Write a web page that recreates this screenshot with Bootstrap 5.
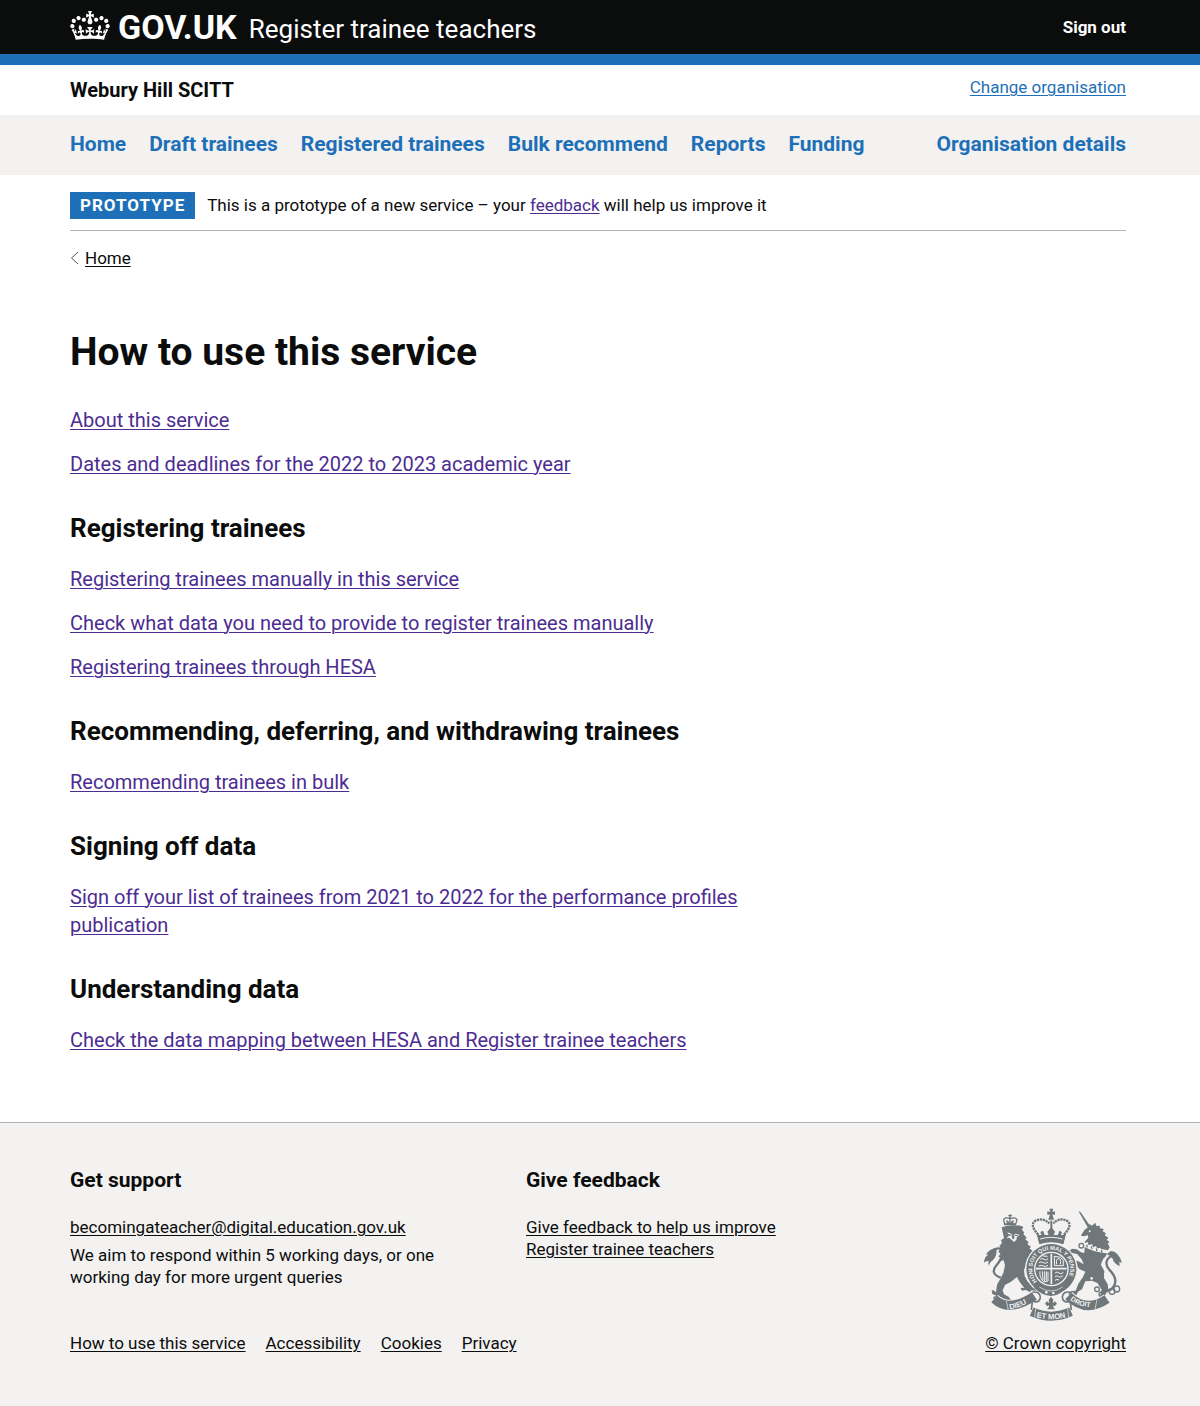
<!DOCTYPE html>
<html lang="en">
<head>
<meta charset="utf-8">
<meta name="viewport" content="width=device-width, initial-scale=1">
<title>How to use this service - Register trainee teachers</title>
<link href="https://cdn.jsdelivr.net/npm/bootstrap@5.3.0/dist/css/bootstrap.min.css" rel="stylesheet">
<style>
  body { font-family: Roboto, "Liberation Sans", sans-serif; font-size: 17px; line-height: 22px; color: #0b0c0c; background: #f3f2f1; }
  .page-width { max-width: 1060px; margin: 0 auto; padding-right: 4px; }
  a { color: inherit; text-decoration-thickness: 1px; text-underline-offset: 2px; }
  a:hover { color: #003078; }
  .site-header { background: #0b0c0c; border-bottom: 11px solid #1d70b8; color: #fff; }
  .site-header .page-width { height: 54px; }
  .logo-text { font-size: 34px; line-height: 40px; font-weight: 700; }
  .service-name { font-size: 26px; line-height: 40px; padding-top: 4px; }
  .org-bar { background: #fff; padding: 11px 0; }
  .org-name { font-size: 20px; line-height: 28px; }
  .blue-link { color: #1d70b8; }
  .main-nav { background: #f3f2f1; font-size: 21px; line-height: 28px; font-weight: 700; padding: 15px 0 17px; }
  .main-nav ul { column-gap: 23px; }
  .phase-banner { border-bottom: 1px solid #b1b4b6; padding: 17px 0 11px; }
  .phase-banner span { padding-bottom: 2px; }
  .phase-tag { background: #1d70b8; color: #fff; font-weight: 700; letter-spacing: 1px; line-height: 27px; padding: 0 10px; margin-right: 12px; }
  .visited { color: #4c2c92; }
  .crumb { padding-top: 16px; column-gap: 6px; }
  .content { font-size: 20px; line-height: 28px; padding: 61px 0 67px; }
  .content h1 { font-size: 39px; line-height: 44px; font-weight: 700; margin: 0 0 32px; }
  .content h2 { font-size: 26px; line-height: 32px; font-weight: 700; margin: 34px 0 21px; }
  .content p { margin: 0 0 16px; }
  .content p:last-child { margin: 0 0 1px; }
  .two-thirds { max-width: 690px; }
  .site-footer { border-top: 1px solid #b1b4b6; padding: 43px 0 52px; }
  .site-footer h2 { font-size: 21px; line-height: 28px; font-weight: 700; margin: 0 0 22px; }
  .site-footer p { margin: 6px 0 44px; max-width: 390px; }
  .foot-links { column-gap: 20px; }
  .crest-block { min-width: 144px; row-gap: 10px; }
</style>
<script src="https://cdn.jsdelivr.net/npm/bootstrap@5.3.0/dist/js/bootstrap.bundle.min.js"></script>
</head>
<body>
<header>
  <div class="site-header">
    <div class="page-width d-flex align-items-center justify-content-between">
      <div class="d-flex align-items-center">
        <a href="#" class="d-flex align-items-center text-decoration-none text-white">
          <svg class="mb-1" width="40" height="29" viewBox="0 0 132 97" fill="#fff" aria-hidden="true"><path fill-rule="evenodd" d="M25 30.2c3.5 1.5 7.7-.2 9.1-3.7 1.5-3.6-.2-7.8-3.9-9.2-3.6-1.4-7.6.3-9.1 3.9-1.4 3.5.3 7.5 3.9 9zM9 39.5c3.6 1.5 7.8-.2 9.2-3.7 1.5-3.6-.2-7.8-3.9-9.1-3.6-1.5-7.6.2-9.1 3.8-1.4 3.5.3 7.5 3.8 9zM4.4 57.2c3.5 1.5 7.7-.2 9.1-3.8 1.5-3.6-.2-7.7-3.9-9.1-3.5-1.5-7.6.3-9.1 3.8-1.4 3.5.3 7.6 3.9 9.1zm38.3-21.4c3.5 1.5 7.7-.2 9.1-3.8 1.5-3.6-.2-7.7-3.9-9.1-3.6-1.5-7.6.3-9.1 3.8-1.3 3.6.4 7.7 3.9 9.1zm64.4-5.6c-3.6 1.5-7.8-.2-9.1-3.7-1.5-3.6.2-7.8 3.8-9.2 3.6-1.4 7.7.3 9.2 3.9 1.3 3.5-.4 7.5-3.9 9zm15.9 9.3c-3.6 1.5-7.7-.2-9.1-3.7-1.5-3.6.2-7.8 3.7-9.1 3.6-1.5 7.7.2 9.2 3.8 1.5 3.5-.3 7.5-3.8 9zm4.7 17.7c-3.6 1.5-7.8-.2-9.2-3.8-1.5-3.6.2-7.7 3.9-9.1 3.6-1.5 7.7.3 9.2 3.8 1.3 3.5-.4 7.6-3.9 9.1zM89.3 35.8c-3.6 1.5-7.8-.2-9.2-3.8-1.4-3.6.2-7.7 3.9-9.1 3.6-1.5 7.7.3 9.2 3.8 1.4 3.6-.3 7.7-3.9 9.1zM69.7 17.7l8.9 4.7V9.3l-8.9 2.8c-.2-.3-.5-.6-.9-.9L72.4 0H59.6l3.5 11.2c-.3.3-.6.5-.9.9l-8.8-2.8v13.1l8.8-4.7c.3.3.6.7.9.9l-5 15.4v.1c-.2.8-.4 1.6-.4 2.4 0 4.1 3.1 7.5 7 8.1h.2c.3 0 .7.1 1 .1.4 0 .7 0 1-.1h.2c4-.6 7.1-4.1 7.1-8.1 0-.8-.1-1.7-.4-2.4V34l-5.1-15.4c.4-.2.7-.6 1-.9zM66 92.8c16.9 0 32.8 1.1 47.1 3.2 4-16.9 8.9-26.7 14-33.5l-9.6-3.4c1 4.9 1.1 7.2 0 10.2-1.5-1.4-3-4.3-4.2-8.7L108.6 76c2.8-2 5-3.2 7.5-3.3-4.4 9.4-10 11.9-13.6 11.2-4.3-.8-6.3-4.6-5.6-7.9 1-4.7 5.7-5.9 8-.5 4.3-8.7-3-11.4-7.6-8.8 7.1-7.2 7.9-13.5 2.1-21.1-8 6.1-8.1 12.3-4.5 20.8-4.7-5.4-12.1-2.5-9.5 6.2 3.4-5.2 7.9-2 7.2 3.1-.6 4.3-6.4 7.8-13.5 7.2-10.3-.9-10.9-8-11.2-13.8 2.5-.5 7.1 1.8 11 7.3L80.2 60c-4.1 4.4-8 5.3-12.3 5.4 1.4-4.4 8-11.6 8-11.6H55.5s6.4 7.2 7.9 11.6c-4.2-.1-8-1-12.3-5.4l1.4 16.4c3.9-5.5 8.5-7.7 10.9-7.3-.3 5.8-.9 12.8-11.1 13.8-7.2.6-12.9-2.9-13.5-7.2-.7-5 3.8-8.3 7.1-3.1 2.7-8.7-4.6-11.6-9.4-6.2 3.7-8.5 3.6-14.7-4.6-20.8-5.8 7.6-5 13.9 2.2 21.1-4.7-2.6-11.9.1-7.7 8.8 2.3-5.5 7.1-4.2 8.1.5.7 3.3-1.3 7.1-5.7 7.9-3.5.7-9-1.8-13.5-11.2 2.5.1 4.7 1.3 7.5 3.3l-4.7-15.4c-1.2 4.4-2.7 7.2-4.3 8.7-1.1-3-.9-5.3 0-10.2l-9.5 3.4c5 6.9 9.9 16.7 14 33.5 14.8-2.1 30.8-3.2 47.7-3.2z"/></svg>
          <span class="logo-text ms-2">GOV.UK</span>
        </a>
        <a href="#" class="service-name text-decoration-none text-white ms-2 ps-1">Register trainee teachers</a>
      </div>
      <a href="#" class="fw-bold text-decoration-none text-white">Sign out</a>
    </div>
  </div>
  <div class="org-bar">
    <div class="page-width d-flex justify-content-between align-items-start">
      <strong class="org-name">Webury Hill SCITT</strong>
      <a href="#" class="blue-link">Change organisation</a>
    </div>
  </div>
  <nav class="main-nav" aria-label="Primary">
    <ul class="page-width list-unstyled d-flex flex-wrap">
      <li><a href="#" class="blue-link text-decoration-none">Home</a></li>
      <li><a href="#" class="blue-link text-decoration-none">Draft trainees</a></li>
      <li><a href="#" class="blue-link text-decoration-none">Registered trainees</a></li>
      <li><a href="#" class="blue-link text-decoration-none">Bulk recommend</a></li>
      <li><a href="#" class="blue-link text-decoration-none">Reports</a></li>
      <li><a href="#" class="blue-link text-decoration-none">Funding</a></li>
      <li class="ms-auto"><a href="#" class="blue-link text-decoration-none">Organisation details</a></li>
    </ul>
  </nav>
</header>
<div class="bg-white">
  <div class="page-width">
    <div class="phase-banner d-flex align-items-center">
      <strong class="phase-tag">PROTOTYPE</strong>
      <span>This is a prototype of a new service – your <a href="#" class="visited">feedback</a> will help us improve it</span>
    </div>
    <nav class="crumb d-flex align-items-center" aria-label="Breadcrumb">
      <svg width="9" height="14" viewBox="0 0 9 14" fill="none" stroke="#505a5f" aria-hidden="true"><path d="M8 1 1.500 7 8 13"/></svg>
      <a href="#">Home</a>
    </nav>
    <main class="content">
      <div class="two-thirds">
        <h1>How to use this service</h1>
        <p><a href="#" class="visited">About this service</a></p>
        <p><a href="#" class="visited">Dates and deadlines for the 2022 to 2023 academic year</a></p>
        <h2>Registering trainees</h2>
        <p><a href="#" class="visited">Registering trainees manually in this service</a></p>
        <p><a href="#" class="visited">Check what data you need to provide to register trainees manually</a></p>
        <p><a href="#" class="visited">Registering trainees through HESA</a></p>
        <h2>Recommending, deferring, and withdrawing trainees</h2>
        <p><a href="#" class="visited">Recommending trainees in bulk</a></p>
        <h2>Signing off data</h2>
        <p><a href="#" class="visited">Sign off your list of trainees from 2021 to 2022 for the performance profiles publication</a></p>
        <h2>Understanding data</h2>
        <p><a href="#" class="visited">Check the data mapping between HESA and Register trainee teachers</a></p>
      </div>
    </main>
  </div>
</div>
<footer class="site-footer">
  <div class="page-width d-flex align-items-end">
    <div class="flex-grow-1">
      <div class="row g-0">
        <div class="col-6">
          <h2>Get support</h2>
          <a href="#">becomingateacher@digital.education.gov.uk</a>
          <p>We aim to respond within 5 working days, or one working day for more urgent queries</p>
        </div>
        <div class="col-6">
          <h2>Give feedback</h2>
          <a href="#">Give feedback to help us improve<br>Register trainee teachers</a>
        </div>
      </div>
      <ul class="foot-links list-unstyled d-flex flex-wrap mb-0">
        <li><a href="#">How to use this service</a></li>
        <li><a href="#">Accessibility</a></li>
        <li><a href="#">Cookies</a></li>
        <li><a href="#">Privacy</a></li>
      </ul>
    </div>
    <div class="crest-block d-flex flex-column align-items-end">
      <svg class="me-1" width="139" height="114" viewBox="42 39 417 342" fill="#6f777b" aria-hidden="true">
        <!-- lion: tail, small crown, maned head, body and legs -->
        <path d="M72 166q26-16 27 10-1 18-16 34-22 26 12 38" fill="none" stroke="#6f777b" stroke-width="7"/>
        <path d="M82 158q4 26-12 39-9 5-10 17-4-10-1-17-10 1-14 6 1-19 13-24l-7-1q10-16 31-20z"/>
        <g fill="none" stroke="#6f777b" stroke-width="4"><path d="M107 88l-3-14q3-9 19-3 17-6 21 3l-4 14M123 58v26M118 62h11M113 76l3 8M133 76l-3 8"/></g>
        <path d="M105 85h36v6h-36zM113 85l5-7 5 7 5-7 6 7z"/>
        <path d="M98 97q28-11 62-3l3 4-5 5 8 10-3 4 10 11-4 5 10 9-4 5 11 9-5 4 10 8-5 6 13 9-3 6-13-4 26 19-6 13-20-12-11 2-7 18 2 18 9 17 20 15 6 12-15-1-4 6-12-7-12 2-5-9 12 1-14-18-8-15-18 14-18 10-7 16 4 12 14 7 8 11-9-1-5 8-13-7-11 7-6-9-9 3-1-11 9-4-12-5-2-12 8 2 5 5 3-23 10-18 9-17 5-23-4-15-10 2 2-7-8-7 7-7-7-7 7-10-4-7 8-9-3-8 9-7z"/>
        <path d="M115 112l12 4 5 9 7-9 13 4-8 5-2 9-6 7-7-5-8-8-9 2 8-8z" fill="#f3f2f1"/>
        <path d="M117 118h8v4h-8zM138 120h8v3h-8zM127 120l10 4-2 9-5-2z"/>
        <!-- unicorn: horn, head and mane, collar, body, hoofs and tail -->
        <path d="M328 48l7 4 29 42-7 4z"/>
        <path d="M338 118l9-14 11-8 4-9 7 5 10-9 3 10 11-1-1 7 12 3-3 7 10 6-4 6 11 7-5 6 9 8-6 3 6 12-5 9-20-4-26-6-27-12 14-16-2-8-10 4-10-2z"/>
        <circle cx="362" cy="109" r="3" fill="#f3f2f1"/>
        <path d="M344 137l5 7 7-3 3 10 10-4 3 10 9-4 4 9 9-4 4 9 8-3-1 10q-35-4-61-25z" fill="#f3f2f1"/>
        <path d="M347 156q28 16 67 19-1 10-11 16-6 10-7 19l10 18-1 21 11 19 2 17-12 18-3 17-10 9-5-10 4-12 6-23-13-20-16-7-20 2-10 24-12 7-6 13-15 2-8-7 8-10 14-1 8-21 14-20 7-16-17-7-13-15-17-5-7-15-10-7 5-8 14 8 8 14 16 4 16 9-6-15-13-15-14-4-12 6-3-10 13-9 14 2 13 9 10 2z"/>
        <path d="M353 149l2 8M367 154l2 8M382 160l2 8M397 165l2 8" stroke="#6f777b" stroke-width="4"/>
        <path d="M414 288q23-5 25-29 1-16-19-36-13-16-4-31 14-17 28 0" fill="none" stroke="#6f777b" stroke-width="7"/>
        <path d="M425 168q24 1 34 36l-8-4 1 13q-17-6-22-23-6-9-17-12z"/>
        <g fill="none" stroke="#6f777b" stroke-width="4"><circle cx="384" cy="283" r="7"/><circle cx="397" cy="298" r="7"/><circle cx="429" cy="289" r="9"/><circle cx="443" cy="282" r="9"/><circle cx="337" cy="152" r="7"/></g>
        <g fill="#f3f2f1"><circle cx="404" cy="210" r="4"/><circle cx="368" cy="250" r="4"/><circle cx="409" cy="238" r="4"/></g>
        <!-- large crown -->
        <path d="M208 119q-27-29-10-41 21-12 43 7M285 119q27-29 10-41-21-12-42 7" fill="none" stroke="#6f777b" stroke-width="7" stroke-dasharray="7 2"/>
        <path d="M247 77v38" stroke="#6f777b" stroke-width="6"/>
        <path d="M241 41h12l-3 10 8-2v11l-8-2 5 16h-17l5-16-8 2V49l9 2zM204 116l14 7-4-12 8-4 6 15 12 1-5-13 12-14 11 14-5 13 13-1 5-15 8 4-4 12 15-7-7 32q-37-12-72 0z"/>
        <!-- garter and shield -->
        <circle cx="247" cy="222" r="79" fill="#f3f2f1"/>
        <path d="M204 120l7 26q36-12 72 0l7-26z"/>
        <path d="M213 132q34-10 67 0" fill="none" stroke="#f3f2f1" stroke-width="3"/>
        <circle cx="247" cy="222" r="75"/>
        <circle cx="247" cy="222" r="50" fill="none" stroke="#f3f2f1" stroke-width="4"/>
        <path d="M247 176v92M201 221h92" stroke="#f3f2f1" stroke-width="5"/>
        <g stroke="#f3f2f1" stroke-width="3" fill="none">
          <path d="M214 193q6-6 11 0t12-2M210 203q7-5 13 0t14-2M209 213q8-4 14 0t14-2M222 183l14 1"/>
          <path d="M258 234q7-6 12 0t13-2M258 245q6-5 11 0t13-3M258 256q6-5 12-1"/>
          <path d="M256 184l19 3 8 9v16h-26zM263 208q-3-17 6-17t5 17"/>
          <path d="M213 229q-3 20 12 32l12-3V230M220 229l2 27M227 229v30M232 229v28"/>
        </g>
        <path id="garter-path" d="M204 259A57 57 0 1 1 288 261" fill="none"/>
        <text font-family="Liberation Sans, sans-serif" font-weight="700" font-size="17" fill="#f3f2f1"><textPath href="#garter-path">HONI SOIT QUI MAL Y PENSE</textPath></text>
        <path d="M203 265q38 40 82 1l7 12q-18 22-46 25-28-2-51-24z"/>
        <path d="M211 276q36 24 70 0" fill="none" stroke="#f3f2f1" stroke-width="2"/>
        <g fill="#f3f2f1"><circle cx="232" cy="292" r="4"/><circle cx="253" cy="294" r="4"/></g>
        <!-- motto scroll -->
        <g fill="none" stroke="#6f777b">
          <path d="M76 312q44 42 120-9M298 303q52 52 116 9" stroke="#f3f2f1" stroke-width="33"/>
          <path d="M76 312q44 42 120-9M298 303q52 52 116 9" stroke-width="27"/>
          <path d="M188 350q58 27 118 0" stroke-width="27"/>
          <path d="M190 292q22-5 24 14-1 17-18 14-10-4-5-12M190 320l-3 25M304 292q-22-5-24 14 1 17 18 14 10-4 5-12M304 320l3 25" stroke-width="5"/>
        </g>
        <path d="M112 318l6 28M384 314l-6 28M200 340l-3 28M296 340l3 28" stroke="#f3f2f1" stroke-width="2"/>
        <path d="M246 305l7 9-2 11 7-6 6 7-7 8-5-3 1 5 5 7h-24l6-7v-5l-5 3-7-8 6-7 7 6-2-11z"/>
        <path id="motto-left" d="M122 343q35-4 68-30" fill="none"/>
        <path id="motto-mid" d="M202 366q46 14 96-1" fill="none"/>
        <path id="motto-right" d="M303 315q30 24 82 22" fill="none"/>
        <g font-family="Liberation Sans, sans-serif" font-weight="700" font-size="23" fill="#f3f2f1">
          <text><textPath href="#motto-left">DIEU</textPath></text>
          <text><textPath href="#motto-mid">ET MON</textPath></text>
          <text font-size="21"><textPath href="#motto-right">DROIT</textPath></text>
        </g>
      </svg>
      <a href="#" class="text-nowrap">© Crown copyright</a>
    </div>
  </div>
</footer>
</body>
</html>
